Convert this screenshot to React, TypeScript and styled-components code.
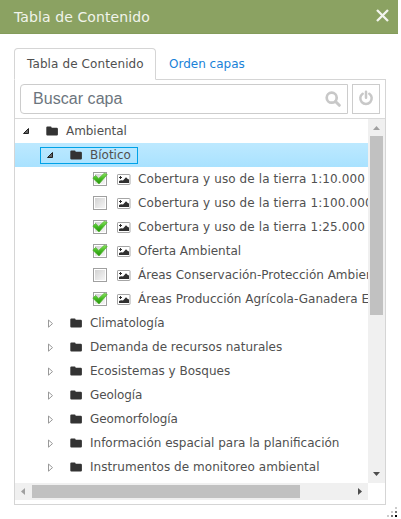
import React from "react";
import styled, { createGlobalStyle, css } from "styled-components";

const GlobalStyle = createGlobalStyle`
  * { box-sizing: border-box; }
  body { margin: 0; background: #fff; overflow: hidden; }
`;

const Window = styled.main`
  position: relative;
  width: 398px;
  height: 519px;
  background: #fff;
  color: #505050;
  font-family: "DejaVu Sans", Verdana, sans-serif;
  font-size: 12px;
`;

const TitleBar = styled.header`
  display: flex;
  align-items: center;
  justify-content: space-between;
  height: 34px;
  padding: 0 9px 0 14px;
  background: #8ba262;
  border-bottom: 1px solid #849c5b;
  color: #f1f4eb;
  svg { display: block; margin-top: -3px; }
`;

const Title = styled.h1<{ $spacing: number }>`
  margin: 0;
  font-size: 14px;
  font-weight: 400;
  white-space: nowrap;
  letter-spacing: ${(p) => p.$spacing}px;
`;

const Content = styled.section`
  display: flex;
  flex-direction: column;
  padding: 14px 12px 0 14px;
`;

const Tabs = styled.nav`
  display: flex;
  height: 32px;
`;

const Tab = styled.div<{ $active?: boolean; $spacing: number }>`
  display: flex;
  align-items: center;
  height: 32px;
  padding: 1px 0 1px 13px;
  white-space: nowrap;
  letter-spacing: ${(p) => p.$spacing}px;
  color: #1a82d8;
  border-bottom: 1px solid #d5d5d5;
  flex: 1;
  ${(p) =>
    p.$active &&
    css`
      flex: 0 0 142px;
      padding: 0 0 0 12px;
      color: #505050;
      border: 1px solid #d5d5d5;
      border-bottom-color: #fff;
      border-radius: 4px 4px 0 0;
    `}
`;

const Panel = styled.div`
  height: 425px;
  border: 1px solid #d5d5d5;
  border-top: 0;
`;

const SearchRow = styled.div`
  display: flex;
  gap: 4px;
  height: 39px;
  padding: 4px 5px;
  border-bottom: 1px solid #d9d9d9;
`;

const SearchBox = styled.div`
  display: flex;
  flex: 1;
  align-items: center;
  justify-content: space-between;
  height: 30px;
  padding: 0 6px 0 12px;
  border: 1px solid #ccc;
  border-radius: 4px 0 0 4px;
  color: #6c757d;
  font-family: "Liberation Sans", Arial, sans-serif;
  font-size: 16px;
`;

const Placeholder = styled.span`
  letter-spacing: 0.05px;
`;

const PowerButton = styled.div`
  display: flex;
  align-items: center;
  justify-content: center;
  width: 28px;
  height: 30px;
  padding-bottom: 2px;
  border: 1px solid #ccc;
`;

const TreeArea = styled.div`
  display: grid;
  grid-template-columns: 353px 17px;
  grid-template-rows: 364px 17px;
`;

const Tree = styled.div`
  overflow: hidden;
  min-width: 0;
`;

const Row = styled.div<{ $selected?: boolean; $level: number }>`
  display: flex;
  align-items: center;
  height: 24px;
  padding-left: ${(p) => [1, 25, 72][p.$level]}px;
  background: ${(p) => (p.$selected ? "linear-gradient(#bde9ff, #a9e2ff)" : "none")};
`;

const Node = styled.div<{ $focused?: boolean }>`
  display: flex;
  align-items: center;
  height: 17px;
  padding-right: 6px;
  border: 1px solid ${(p) => (p.$focused ? "#00a2e8" : "transparent")};
`;

const Slot = styled.span<{ $w: number }>`
  display: block;
  flex: 0 0 ${(p) => p.$w}px;
  svg { display: block; }
`;

const Label = styled.span<{ $spacing: number }>`
  white-space: nowrap;
  line-height: 16px;
  letter-spacing: ${(p) => p.$spacing}px;
`;

const Bar = styled.div<{ $vertical?: boolean }>`
  display: flex;
  flex-direction: ${(p) => (p.$vertical ? "column" : "row")};
  align-items: center;
  justify-content: space-between;
  background: #f0f0f0;
  svg { display: block; flex: none; }
`;

const Thumb = styled.div<{ $vertical?: boolean }>`
  width: ${(p) => (p.$vertical ? 13 : 268)}px;
  height: ${(p) => (p.$vertical ? 179 : 13)}px;
  margin: ${(p) => (p.$vertical ? "0 0 auto" : "0 auto 0 0")};
  background: #c1c1c1;
`;

const ResizeGrip = styled.svg`
  position: absolute;
  right: 0;
  bottom: 1px;
`;

const Twisty = ({ open }: { open?: boolean }) => (
  <svg width="8" height="9" viewBox="0 0 8 9">
    {open ? (
      <path d="M6.500 1.500v5h-5z" fill="#666" stroke="#222" />
    ) : (
      <path d="M2.500 1v7.200l4-3.600z" fill="#fff" stroke="#999" />
    )}
  </svg>
);

const Folder = () => (
  <svg width="12" height="11" viewBox="0 0 12 11">
    <path d="M.3 1.600Q.3 .5 1.400.5h3.200q1 0 1 1.100v.2h5.200q1.100 0 1.100 1.100v5.500q0 1.100-1.100 1.100H1.400Q.3 9.500 .3 8.400z" fill="#333" />
  </svg>
);

const Picture = () => (
  <svg width="14" height="11" viewBox="0 0 14 11">
    <rect x=".5" y=".5" width="12.500" height="10" rx=".6" fill="#fff" stroke="#a5a5a5" />
    <path d="M2 9V7l2-.8 2 .3 3-3.300L10.800 5 12 5.500V9z" fill="#303030" />
    <path d="M3.500 2v3M2 3.500h3" stroke="#303030" />
  </svg>
);

const Check = ({ on }: { on: boolean }) => (
  <svg width="16" height="17" viewBox="0 0 16 17">
    <defs>
      <linearGradient id="box" x1="0" y1="0" x2="1" y2="1">
        <stop stopColor="#d3d3d3" />
        <stop offset="1" stopColor="#f5f5f5" />
      </linearGradient>
      <linearGradient id="tick" x1="0" y1="0" x2="0" y2="1">
        <stop stopColor="#8be05f" />
        <stop offset=".5" stopColor="#43bb22" />
        <stop offset="1" stopColor="#278d0d" />
      </linearGradient>
    </defs>
    <rect x="1.500" y="1.500" width="13" height="13" fill="#fff" stroke="#a0a0a0" />
    <rect x="3" y="3" width="10" height="10" fill="url(#box)" />
    {on && <path d="M.8 7.200 3.500 4.500 6.700 7.400 12.300 2.300 15.200 3.500 7 13z" fill="url(#tick)" stroke="#54b735" strokeWidth=".8" />}
  </svg>
);

type Direction = "up" | "down" | "left" | "right";
const ARROWS: Record<Direction, string> = {
  up: "M5 11h7L8.500 7z",
  down: "M5 6h7L8.500 10z",
  left: "M10 5v7L6 8.500z",
  right: "M7 5v7l4-3.500z",
};
const Arrow = ({ to, muted }: { to: Direction; muted?: boolean }) => (
  <svg width="17" height="17" viewBox="0 0 17 17">
    <path d={ARROWS[to]} fill={muted ? "#a0a0a0" : "#4d4d4d"} />
  </svg>
);

const layers = [
  { name: "Cobertura y uso de la tierra 1:10.000", on: true, spacing: 0.1 },
  { name: "Cobertura y uso de la tierra 1:100.000", on: false, spacing: 0.1 },
  { name: "Cobertura y uso de la tierra 1:25.000", on: true, spacing: 0.1 },
  { name: "Oferta Ambiental", on: true, spacing: 0 },
  { name: "Áreas Conservación-Protección Ambiental", on: false, spacing: 0 },
  { name: "Áreas Producción Agrícola-Ganadera E", on: true, spacing: 0 },
];

const groups = [
  { name: "Climatología", spacing: -0.05 },
  { name: "Demanda de recursos naturales", spacing: 0 },
  { name: "Ecosistemas y Bosques", spacing: 0 },
  { name: "Geología", spacing: -0.1 },
  { name: "Geomorfología", spacing: -0.05 },
  { name: "Información espacial para la planificación", spacing: 0 },
  { name: "Instrumentos de monitoreo ambiental", spacing: 0.05 },
];

const FolderRow = ({ name, spacing, level, open, selected }: { name: string; spacing: number; level: number; open?: boolean; selected?: boolean }) => (
  <Row $level={level} $selected={selected}>
    <Node $focused={selected}>
      <Slot $w={5} />
      <Slot $w={24}><Twisty open={open} /></Slot>
      <Slot $w={20}><Folder /></Slot>
      <Label $spacing={spacing}>{name}</Label>
    </Node>
  </Row>
);

export default function App() {
  return (
    <>
      <GlobalStyle />
      <Window>
        <TitleBar>
          <Title $spacing={0.1}>Tabla de Contenido</Title>
          <svg width="13" height="13" viewBox="0 0 13 13">
            <path d="m1 1 11 11m0-11-11 11" stroke="#f3f5ee" strokeWidth="2.300" />
          </svg>
        </TitleBar>
        <Content>
          <Tabs>
            <Tab $active $spacing={0.1}>Tabla de Contenido</Tab>
            <Tab $spacing={0}>Orden capas</Tab>
          </Tabs>
          <Panel>
            <SearchRow>
              <SearchBox>
                <Placeholder>Buscar capa</Placeholder>
                <svg width="16" height="16" viewBox="0 0 16 16">
                  <circle cx="6.700" cy="6.700" r="5" fill="none" stroke="#c8c8c8" strokeWidth="2.700" />
                  <path d="m10.500 10.500 3.800 3.800" stroke="#c8c8c8" strokeWidth="3" strokeLinecap="round" />
                </svg>
              </SearchBox>
              <PowerButton>
                <svg width="16" height="16" viewBox="0 0 16 16" fill="none" stroke="#c8c8c8" strokeWidth="2.500" strokeLinecap="round">
                  <path d="M8 1.800v6M4.700 3.700a5.700 5.700 0 1 0 6.600 0" />
                </svg>
              </PowerButton>
            </SearchRow>
            <TreeArea>
              <Tree>
                <FolderRow name="Ambiental" spacing={-0.05} level={0} open />
                <FolderRow name="Bíotico" spacing={0} level={1} open selected />
                {layers.map((layer) => (
                  <Row key={layer.name} $level={2}>
                    <Node>
                      <Slot $w={4} />
                      <Slot $w={25}><Check on={layer.on} /></Slot>
                      <Slot $w={21}><Picture /></Slot>
                      <Label $spacing={layer.spacing}>{layer.name}</Label>
                    </Node>
                  </Row>
                ))}
                {groups.map((group) => (
                  <FolderRow key={group.name} name={group.name} spacing={group.spacing} level={1} />
                ))}
              </Tree>
              <Bar $vertical>
                <Arrow to="up" muted />
                <Thumb $vertical />
                <Arrow to="down" />
              </Bar>
              <Bar>
                <Arrow to="left" muted />
                <Thumb />
                <Arrow to="right" />
              </Bar>
            </TreeArea>
          </Panel>
        </Content>
        <ResizeGrip width="12" height="12" viewBox="0 0 12 12">
          <path d="M9 1h2v2H9zM5 5h2v2H5zM1 9h2v2H1z" fill="#ccc" />
          <path d="M9 5h2v2H9zM5 9h2v2H5z" fill="#777" />
          <path d="M9 9h2v2H9z" fill="#000" />
        </ResizeGrip>
      </Window>
    </>
  );
}
